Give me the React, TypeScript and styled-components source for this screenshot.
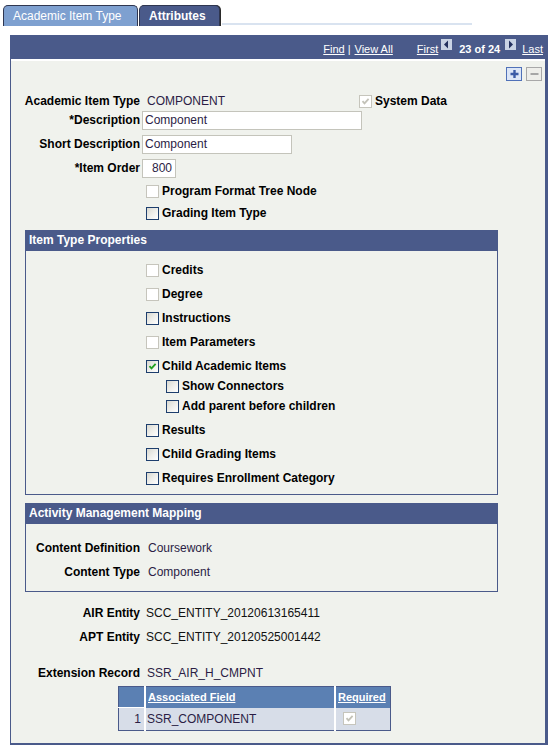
import React from "react";
import styled, { createGlobalStyle } from "styled-components";

const NAVY = "#4a5a8a";
const VALUE = "#2b1d45";

const GlobalStyle = createGlobalStyle`
  html, body {
    margin: 0;
    padding: 0;
    background: #ffffff;
  }

  body {
    font-family: "Liberation Sans", Arial, sans-serif;
    font-size: 12px;
    color: #000;
  }
`;

interface CheckProps {
  checked?: boolean;
  disabled?: boolean;
}

const Check: React.FC<CheckProps> = ({ checked, disabled }) => (
  <Box $disabled={disabled}>
    {checked && (
      <svg width="9" height="9" viewBox="0 0 9 9">
        <path
          d="M1.5 4.2 L3.5 6.4 L7.6 1.8"
          fill="none"
          stroke={disabled ? "#c3c2b8" : "#21a121"}
          strokeWidth="1.8"
        />
      </svg>
    )}
  </Box>
);

const App: React.FC = () => {
  return (
    <Page>
      <GlobalStyle />
      <TabBar>
        <Tab $w={135}>Academic Item Type</Tab>
        <Tab $w={81} $active>
          Attributes
        </Tab>
        <TabRule />
      </TabBar>

      <Panel>
        <PanelHeader>
          <HeaderLink>Find</HeaderLink>
          <HeaderSep>|</HeaderSep>
          <HeaderLink>View All</HeaderLink>
          <HeaderLink $ml={24}>First</HeaderLink>
          <PagerArrow $ml={3}>
            <svg width="11" height="11" viewBox="0 0 11 11">
              <path d="M7 1.5 L7 9.5 L3 5.5 Z" fill="#23305e" />
            </svg>
          </PagerArrow>
          <PageCount>23 of 24</PageCount>
          <PagerArrow $ml={5}>
            <svg width="11" height="11" viewBox="0 0 11 11">
              <path d="M4 1.5 L4 9.5 L8 5.5 Z" fill="#23305e" />
            </svg>
          </PagerArrow>
          <HeaderLink $ml={6}>Last</HeaderLink>
        </PanelHeader>

        <Body>
          <Toolbar>
            <IconButton $kind="add">
              <svg width="13" height="12" viewBox="0 0 13 12">
                <path d="M6.5 2 V10 M2.5 6 H10.5" stroke="#3a5aa6" strokeWidth="2.4" />
              </svg>
            </IconButton>
            <IconButton $kind="remove">
              <svg width="13" height="12" viewBox="0 0 13 12">
                <path d="M2.5 6 H10.5" stroke="#a6a6a6" strokeWidth="2" />
              </svg>
            </IconButton>
          </Toolbar>

          <FieldRow $h={14} $mt={13}>
            <Label>Academic Item Type</Label>
            <Value $w={219}>COMPONENT</Value>
            <CheckRow $h={14}>
              <Check checked disabled />
              <CheckText>System Data</CheckText>
            </CheckRow>
          </FieldRow>
          <FieldRow $h={24}>
            <Label>*Description</Label>
            <TextInput $w={220} defaultValue="Component" />
          </FieldRow>
          <FieldRow $h={24}>
            <Label>Short Description</Label>
            <TextInput $w={150} defaultValue="Component" />
          </FieldRow>
          <FieldRow $h={24}>
            <Label>*Item Order</Label>
            <TextInput $w={34} $right defaultValue="800" />
          </FieldRow>

          <CheckRow $h={22} $indent={135}>
            <Check disabled />
            <CheckText>Program Format Tree Node</CheckText>
          </CheckRow>
          <CheckRow $h={22} $indent={135}>
            <Check />
            <CheckText>Grading Item Type</CheckText>
          </CheckRow>

          <GroupBox $mt={6}>
            <GroupHeader>Item Type Properties</GroupHeader>
            <CheckList>
              <CheckRow $h={20} $mt={4}>
                <Check disabled />
                <CheckText>Credits</CheckText>
              </CheckRow>
              <CheckRow $h={20} $mt={4}>
                <Check disabled />
                <CheckText>Degree</CheckText>
              </CheckRow>
              <CheckRow $h={20} $mt={4}>
                <Check />
                <CheckText>Instructions</CheckText>
              </CheckRow>
              <CheckRow $h={20} $mt={4}>
                <Check disabled />
                <CheckText>Item Parameters</CheckText>
              </CheckRow>
              <CheckRow $h={20} $mt={4}>
                <Check checked />
                <CheckText>Child Academic Items</CheckText>
              </CheckRow>
              <CheckRow $h={20} $indent={20}>
                <Check />
                <CheckText>Show Connectors</CheckText>
              </CheckRow>
              <CheckRow $h={20} $indent={20}>
                <Check />
                <CheckText>Add parent before children</CheckText>
              </CheckRow>
              <CheckRow $h={20} $mt={4}>
                <Check />
                <CheckText>Results</CheckText>
              </CheckRow>
              <CheckRow $h={20} $mt={4}>
                <Check />
                <CheckText>Child Grading Items</CheckText>
              </CheckRow>
              <CheckRow $h={20} $mt={4}>
                <Check />
                <CheckText>Requires Enrollment Category</CheckText>
              </CheckRow>
            </CheckList>
          </GroupBox>

          <GroupBox $mt={8}>
            <GroupHeader>Activity Management Mapping</GroupHeader>
            <MappingList>
              <FieldRow $h={24}>
                <Label $w={114}>Content Definition</Label>
                <Value $pl={8}>Coursework</Value>
              </FieldRow>
              <FieldRow $h={24}>
                <Label $w={114}>Content Type</Label>
                <Value $pl={8}>Component</Value>
              </FieldRow>
            </MappingList>
          </GroupBox>

          <FieldRow $h={24} $mt={9}>
            <Label>AIR Entity</Label>
            <Value $pl={6} $plain>
              SCC_ENTITY_20120613165411
            </Value>
          </FieldRow>
          <FieldRow $h={24}>
            <Label>APT Entity</Label>
            <Value $pl={6} $plain>
              SCC_ENTITY_20120525001442
            </Value>
          </FieldRow>
          <FieldRow $h={24} $mt={12}>
            <Label>Extension Record</Label>
            <Value $pl={7}>SSR_AIR_H_CMPNT</Value>
          </FieldRow>

          <GridTable>
            <thead>
              <tr>
                <GridHead $w={25} />
                <GridHead $w={186}>
                  <GridHeadLink>Associated Field</GridHeadLink>
                </GridHead>
                <GridHead $w={52}>
                  <GridHeadLink>Required</GridHeadLink>
                </GridHead>
              </tr>
            </thead>
            <tbody>
              <tr>
                <RowNum>1</RowNum>
                <GridCell>SSR_COMPONENT</GridCell>
                <GridCell $pl={7}>
                  <Check checked disabled />
                </GridCell>
              </tr>
            </tbody>
          </GridTable>
        </Body>
      </Panel>
    </Page>
  );
};

// Styled Components
const Page = styled.div`
  padding: 5px 0 0 3px;
`;

const TabBar = styled.div`
  display: flex;
  align-items: flex-end;
  gap: 1px;
  height: 21px;
`;

const Tab = styled.div<{ $active?: boolean; $w: number }>`
  box-sizing: border-box;
  width: ${(p) => p.$w}px;
  height: 21px;
  padding: 3px 0 0 9px;
  border: 1px solid #2f3650;
  border-bottom: none;
  border-radius: 5px 5px 0 0;
  background: ${(p) => (p.$active ? NAVY : "#7ea0d0")};
  color: #ffffff;
  font-weight: ${(p) => (p.$active ? "bold" : "normal")};
  white-space: nowrap;
  box-shadow: ${(p) => (p.$active ? "1px 0 0 #2a2a2a" : "none")};
`;

const TabRule = styled.div`
  width: 250px;
  height: 2px;
  margin: 0 0 1px 1px;
  background: #d9e3f0;
`;

const Panel = styled.div`
  box-sizing: border-box;
  width: 538px;
  margin: 9px 0 0 7px;
  background: #f0f2ed;
  border-style: solid;
  border-color: ${NAVY};
  border-width: 0 3px 2px 1px;
  padding-bottom: 12px;
`;

const PanelHeader = styled.div`
  box-sizing: border-box;
  height: 24px;
  display: flex;
  justify-content: flex-end;
  align-items: flex-end;
  padding: 0 2px 3px 0;
  background: ${NAVY};
  color: #ffffff;
  font-size: 11px;
  line-height: 13px;
`;

const HeaderLink = styled.span<{ $ml?: number }>`
  margin-left: ${(p) => p.$ml ?? 0}px;
  text-decoration: underline;
  cursor: pointer;
`;

const HeaderSep = styled.span`
  margin: 0 4px 0 3px;
`;

const PageCount = styled.span`
  margin-left: 7px;
  font-weight: bold;
`;

const PagerArrow = styled.span<{ $ml: number }>`
  align-self: flex-start;
  display: flex;
  width: 11px;
  height: 11px;
  margin: 4px 0 0 ${(p) => p.$ml}px;
  background: #c9d3e4;
`;

const Body = styled.div`
  border-top: 2px solid #ffffff;
  display: flex;
  flex-direction: column;
`;

const Toolbar = styled.div`
  display: flex;
  justify-content: flex-end;
  gap: 4px;
  margin-top: 6px;
  padding-right: 3px;
`;

const IconButton = styled.span<{ $kind: "add" | "remove" }>`
  box-sizing: border-box;
  width: 16px;
  height: 14px;
  display: flex;
  align-items: center;
  justify-content: center;
  border: 1px solid ${(p) => (p.$kind === "add" ? "#5071b8" : "#a8a8a8")};
  background: ${(p) => (p.$kind === "add" ? "#dce6f7" : "#eeeeea")};
`;

const FieldRow = styled.div<{ $h: number; $mt?: number }>`
  display: flex;
  align-items: center;
  height: ${(p) => p.$h}px;
  margin-top: ${(p) => p.$mt ?? 0}px;
`;

const Label = styled.span<{ $w?: number }>`
  flex-shrink: 0;
  width: ${(p) => p.$w ?? 129}px;
  text-align: right;
  font-weight: bold;
  white-space: nowrap;
`;

const Value = styled.span<{ $w?: number; $pl?: number; $plain?: boolean }>`
  box-sizing: border-box;
  flex-shrink: 0;
  width: ${(p) => (p.$w ? `${p.$w}px` : "auto")};
  padding-left: ${(p) => p.$pl ?? 7}px;
  color: ${(p) => (p.$plain ? "#111111" : VALUE)};
  white-space: nowrap;
`;

const TextInput = styled.input<{ $w: number; $right?: boolean }>`
  box-sizing: border-box;
  width: ${(p) => p.$w}px;
  height: 19px;
  margin: 0 0 0 2px;
  padding: 0 ${(p) => (p.$right ? "3px" : "2px")} 0 2px;
  border: 1px solid #c4c4bb;
  background: #ffffff;
  font-family: inherit;
  font-size: 12px;
  color: ${VALUE};
  text-align: ${(p) => (p.$right ? "right" : "left")};
  outline: none;
`;

const Box = styled.span<{ $disabled?: boolean }>`
  box-sizing: border-box;
  flex-shrink: 0;
  width: 13px;
  height: 13px;
  display: inline-flex;
  align-items: center;
  justify-content: center;
  border: 1px solid ${(p) => (p.$disabled ? "#c6c5bc" : "#1d3e6d")};
  background: ${(p) =>
    p.$disabled
      ? "#ffffff"
      : "linear-gradient(135deg, #d9d9d1 0%, #eeeeea 50%, #ffffff 100%)"};
`;

const CheckRow = styled.div<{ $h: number; $mt?: number; $indent?: number }>`
  display: flex;
  align-items: center;
  gap: 3px;
  height: ${(p) => p.$h}px;
  margin-top: ${(p) => p.$mt ?? 0}px;
  padding-left: ${(p) => p.$indent ?? 0}px;
`;

const CheckText = styled.span`
  font-weight: bold;
  white-space: nowrap;
`;

const GroupBox = styled.div<{ $mt: number }>`
  box-sizing: border-box;
  width: 473px;
  margin: ${(p) => p.$mt}px 0 0 14px;
  border: 1px solid ${NAVY};
`;

const GroupHeader = styled.div`
  height: 20px;
  line-height: 19px;
  padding-left: 3px;
  background: ${NAVY};
  color: #ffffff;
  font-weight: bold;
`;

const CheckList = styled.div`
  padding: 5px 0 6px 120px;
`;

const MappingList = styled.div`
  padding: 12px 0 7px 0;
`;

const GridTable = styled.table`
  align-self: flex-start;
  margin: 1px 0 0 107px;
  border-collapse: collapse;
  border: 1px solid ${NAVY};
  table-layout: fixed;
`;

const GridHead = styled.th<{ $w: number }>`
  width: ${(p) => p.$w}px;
  height: 20px;
  padding: 0 0 0 2px;
  background: #5b80b3;
  border-left: 2px solid #ffffff;
  text-align: left;
  color: #ffffff;
  font-size: 11px;
  font-weight: bold;

  &:first-child {
    border-left: none;
    padding: 0;
  }
`;

const GridHeadLink = styled.span`
  text-decoration: underline;
  cursor: pointer;
`;

const RowNum = styled.td`
  height: 22px;
  padding: 0 3px 0 0;
  background: #d7dde8;
  border-top: 1px solid #ffffff;
  text-align: right;
  color: ${VALUE};
`;

const GridCell = styled.td<{ $pl?: number }>`
  height: 22px;
  padding: 0 0 0 ${(p) => p.$pl ?? 1}px;
  background: #d7dde8;
  border-left: 2px solid #ffffff;
  color: ${VALUE};
  vertical-align: middle;
  line-height: 12px;
`;

export default App;
